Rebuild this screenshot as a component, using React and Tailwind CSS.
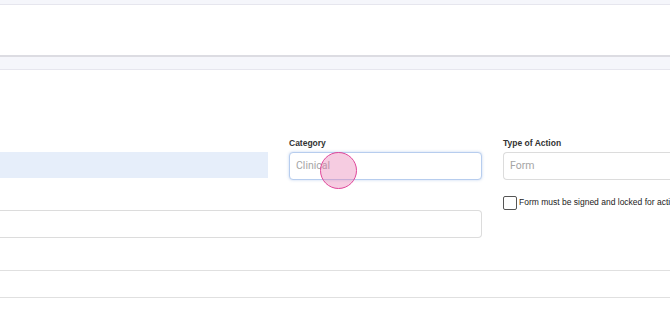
export default function App() {
  return (
    <div className="w-[670px] h-[334px] overflow-hidden bg-white" style={{ fontFamily: '"Liberation Sans", Arial, sans-serif' }}>
      <div className="h-[5px] bg-[#f5f6fb] border-b border-[#e6e6ee]" />
      <div className="h-[50px] bg-white" />
      <div className="h-[15px] bg-[#f5f6fb] border-t-2 border-[#dcdce2] border-b border-b-[#e6e6ee]" />
      <div className="relative pt-[68px]">
        <div className="flex">
          <div className="w-[268px] shrink-0 pt-[14px]">
            <div className="h-[26px] bg-[#e6eefa]" />
          </div>
          <div className="ml-[21px] w-[193px] shrink-0">
            <div className="h-[14px] text-[8.5px] font-semibold text-[#333] leading-[10px]">Category</div>
            <div className="relative h-[28px] rounded-[4px] border border-[#b7cdee] shadow-[0_0_3px_rgba(120,160,220,0.45)] bg-white flex items-center px-[6px] text-[10.5px] text-[#a5a5a5]" style={{ fontFamily: 'Roboto, sans-serif' }}>
              Clinical
              <div className="absolute left-[30px] top-[-1px] w-[37px] h-[37px] rounded-full bg-[rgba(232,120,176,0.38)] border-[1.5px] border-[#e0479a]" />
            </div>
          </div>
          <div className="ml-[21px] flex-1">
            <div className="h-[14px] text-[8.5px] font-semibold text-[#333] leading-[10px]">Type of Action</div>
            <div className="h-[28px] rounded-l-[4px] border border-r-0 border-[#dcdcdc] bg-white flex items-center px-[6px] text-[10.5px] text-[#a5a5a5]" style={{ fontFamily: 'Roboto, sans-serif' }}>
              Form
            </div>
          </div>
        </div>
        <div className="flex mt-[16px]">
          <div className="w-[482px] shrink-0 pt-[14px]">
            <div className="h-[28px] rounded-r-[4px] border border-l-0 border-[#dcdcdc] bg-white" />
          </div>
          <div className="ml-[21px] flex items-start gap-[2px] whitespace-nowrap">
            <div className="w-[14px] h-[14px] shrink-0 rounded-[2px] border-[1.5px] border-[#555] bg-white" />
            <div className="text-[8.5px] text-[#222] leading-[12px]">Form must be signed and locked for action</div>
          </div>
        </div>
        <div className="mt-[32px] h-[28px] border-t border-b border-[#e0e0e0]" />
      </div>
    </div>
  );
}
